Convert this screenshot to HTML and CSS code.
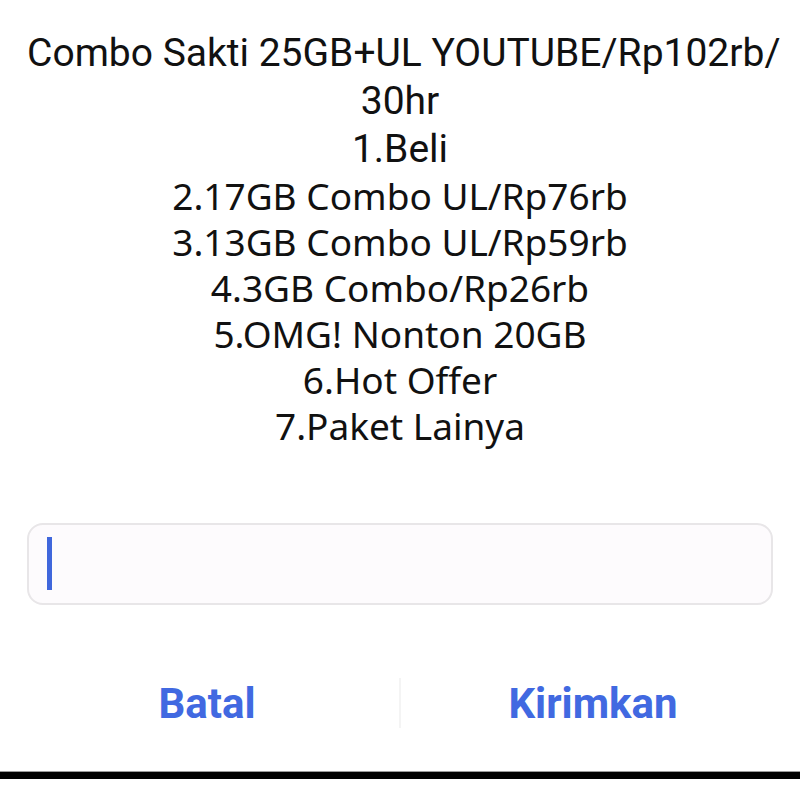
FILE: index.html
```html
<!DOCTYPE html>
<html lang="id">
<head>
  <meta charset="UTF-8" />
  <title>USSD</title>
  <meta name="viewport" content="width=device-width, initial-scale=1.0" />
  <link rel="stylesheet" href="styles.css">
</head>
<body>

<div class="dialog">
  <div class="message">
    <div class="head">
      <div class="line">Combo Sakti 25GB+UL YOUTUBE/Rp102rb/</div>
      <div class="line">30hr</div>
      <div class="line">1.Beli</div>
    </div>
    <ul class="options">
      <li>2.17GB Combo UL/Rp76rb</li>
      <li>3.13GB Combo UL/Rp59rb</li>
      <li>4.3GB Combo/Rp26rb</li>
      <li>5.OMG! Nonton 20GB</li>
      <li>6.Hot Offer</li>
      <li>7.Paket Lainya</li>
    </ul>
  </div>

  <div class="reply">
    <span class="caret"></span>
  </div>

  <div class="buttons">
    <button class="btn">Batal</button>
    <span class="divider"></span>
    <button class="btn">Kirimkan</button>
  </div>
</div>

<div class="nav-bar"></div>

</body>
</html>
```

FILE: styles.css
```css
body {
  margin: 0;
  background-color: #ffffff;
  color: #111111;
}
.dialog {
  width: 800px;
  height: 771px;
  box-sizing: border-box;
  padding: 29px 27px 0;
}
.message {
  text-align: center;
}
.head {
  font-family: 'Roboto', sans-serif;
  font-size: 39px;
}
.head .line {
  height: 48px;
  line-height: 48px;
  white-space: nowrap;
}
.options {
  list-style: none;
  margin: 0;
  padding: 0;
  font-family: 'Noto Sans', sans-serif;
  font-size: 37px;
}
.options li {
  height: 46px;
  line-height: 46px;
  white-space: nowrap;
}
.reply {
  margin-top: 74px;
  height: 82px;
  box-sizing: border-box;
  border: 2px solid #e8e6e8;
  border-radius: 16px;
  background-color: #fdfbfd;
  padding: 12px 0 0 18px;
}
.caret {
  display: block;
  width: 5px;
  height: 53px;
  background-color: #4067dc;
}
.buttons {
  display: flex;
  align-items: center;
  margin: 72px -12px 0;
  height: 52px;
}
.btn {
  flex: 1;
  border: none;
  background: none;
  font-family: 'Roboto', sans-serif;
  font-weight: bold;
  font-size: 42px;
  color: #4169e1;
  padding: 0;
}
.divider {
  width: 2px;
  height: 50px;
  background-color: #f4f4f4;
}
.nav-bar {
  height: 7px;
  background-color: #000000;
  border-top: 1px solid #9a9a9a;
}
```
